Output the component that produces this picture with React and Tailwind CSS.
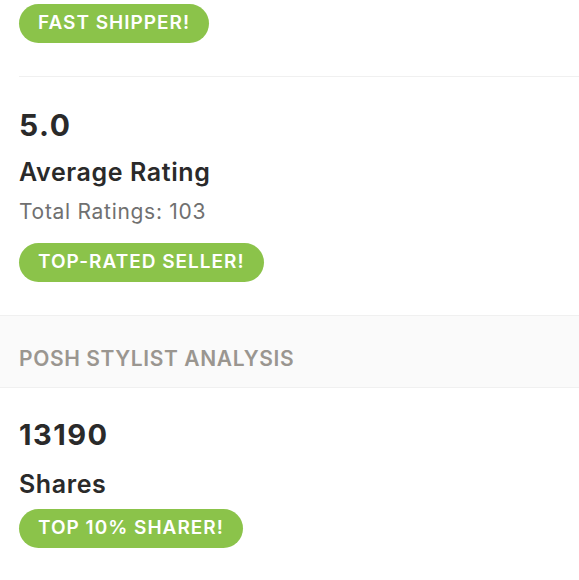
import React from "react";

const Pill = ({ children }) => (
  <span className="inline-flex h-[39px] items-center rounded-full bg-[#8bc34a] px-[19px] text-[19px] font-semibold tracking-[1px] text-white">
    {children}
  </span>
);

export default function App() {
  return (
    <div className="min-h-screen w-[579px] bg-white font-['Inter',sans-serif] text-[#2a2a2a]">
      {/* shipping */}
      <div className="pl-[19px] pt-[4px]">
        <Pill>FAST SHIPPER!</Pill>
      </div>
      <div className="ml-[19px] mt-[33px] h-px bg-[#f0f0f0]" />

      {/* rating */}
      <div className="px-[19px] pb-[33px] pt-[29px]">
        <div className="text-[30px] font-bold leading-[38px] tracking-[1.5px]">5.0</div>
        <div className="mt-[13px] text-[25px] font-semibold leading-[30px] tracking-[0.6px]">Average Rating</div>
        <div className="mt-[12px] text-[21px] leading-[26px] tracking-[0.7px] text-[#707070]">Total Ratings: 103</div>
        <div className="mt-[18px]">
          <Pill>TOP-RATED SELLER!</Pill>
        </div>
      </div>

      {/* stylist analysis header */}
      <div className="flex h-[73px] items-center border-y border-[#f0f0f0] bg-[#fafafa] px-[19px] pt-[14px]">
        <span className="text-[21px] font-semibold tracking-[0.6px] text-[#9a9690]">POSH STYLIST ANALYSIS</span>
      </div>

      {/* shares */}
      <div className="px-[19px] pt-[28px]">
        <div className="text-[29px] font-bold leading-[38px] tracking-[1.5px]">13190</div>
        <div className="mt-[15px] text-[25px] font-semibold leading-[30px] tracking-[0.6px]">Shares</div>
        <div className="mt-[10px]">
          <Pill>TOP 10% SHARER!</Pill>
        </div>
      </div>
    </div>
  );
}
